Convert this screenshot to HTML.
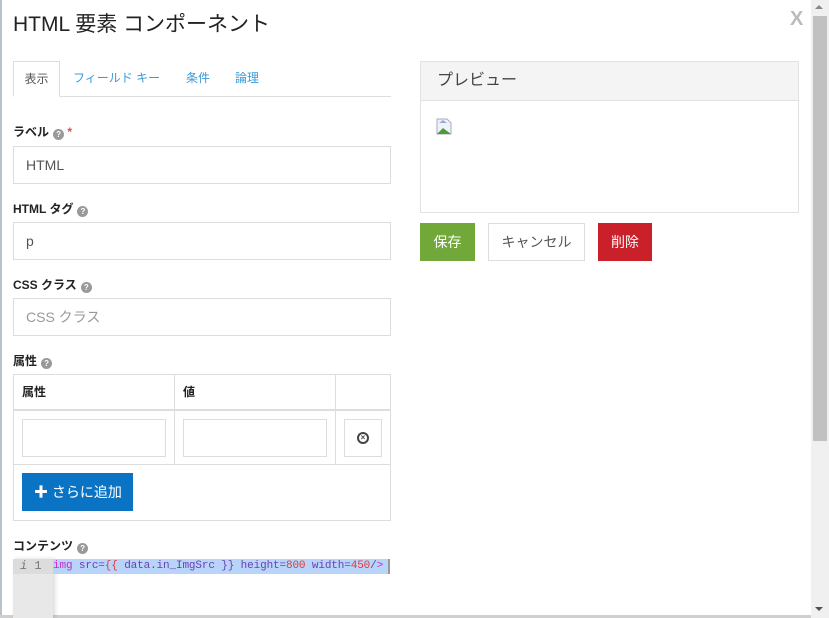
<!DOCTYPE html>
<html><head><meta charset="utf-8"><style>
*{box-sizing:border-box;margin:0;padding:0}
body{width:829px;height:618px;overflow:hidden;background:#fff;font-family:"Liberation Sans","Noto Sans CJK JP",sans-serif;color:#333;position:relative}
.a{position:absolute}
.lbl{position:absolute;left:13px;font-size:12px;font-weight:bold;color:#222;line-height:14px}
.q{display:inline-block;width:11px;height:11px;border-radius:50%;background:#999;color:#fff;font-size:8px;line-height:11px;text-align:center;vertical-align:-1px;margin-left:4px;font-weight:bold}
.inp{position:absolute;left:13px;width:378px;height:38px;border:1px solid #ddd;font-size:14px;color:#555;padding-left:12px;line-height:36px}
.mono{font-family:"Liberation Mono","DejaVu Sans Mono",monospace}
</style></head><body>
<div class="a" style="left:0;top:0;width:2px;height:618px;background:#b8c4cc"></div>
<div class="a" style="left:0;top:615px;width:829px;height:3px;background:#cfcfcf"></div>
<div class="a" style="left:13px;top:10px;font-size:21px;color:#222;line-height:30px">HTML 要素 コンポーネント</div>
<div class="a" style="left:790px;top:7px;font-size:20px;font-weight:bold;color:#bbb;line-height:24px">X</div>
<div class="a" style="left:811px;top:0;width:18px;height:618px;background:#f0f0f0"></div>
<div class="a" style="left:813px;top:16px;width:14px;height:425px;background:#c1c1c1"></div>
<div class="a" style="left:815px;top:5px;width:0;height:0;border-left:4px solid transparent;border-right:4px solid transparent;border-bottom:4px solid #888"></div>
<div class="a" style="left:815px;top:607px;width:0;height:0;border-left:4px solid transparent;border-right:4px solid transparent;border-top:4px solid #505050"></div>
<div class="a" style="left:13px;top:96px;width:378px;height:1px;background:#ddd"></div>
<div class="a" style="left:13px;top:61px;width:47px;height:36px;border:1px solid #ddd;border-bottom:1px solid #fff;background:#fff;font-size:12px;color:#555;text-align:center;line-height:34px">表示</div>
<div class="a" style="left:73px;top:70px;font-size:12px;color:#3a9ad9;line-height:16px">フィールド キー</div>
<div class="a" style="left:186px;top:70px;font-size:12px;color:#3a9ad9;line-height:16px">条件</div>
<div class="a" style="left:235px;top:70px;font-size:12px;color:#3a9ad9;line-height:16px">論理</div>
<div class="lbl" style="top:125px">ラベル<span class="q">?</span> <span style="color:#d9534f">*</span></div>
<div class="inp" style="top:146px">HTML</div>
<div class="lbl" style="top:202px">HTML タグ<span class="q">?</span></div>
<div class="inp" style="top:222px">p</div>
<div class="lbl" style="top:278px">CSS クラス<span class="q">?</span></div>
<div class="inp" style="top:298px;color:#999">CSS クラス</div>
<div class="lbl" style="top:354px">属性<span class="q">?</span></div>
<div class="a" style="left:13px;top:374px;width:378px;height:147px;border:1px solid #ddd"></div>
<div class="a" style="left:13px;top:409px;width:378px;height:2px;background:#ddd"></div>
<div class="a" style="left:13px;top:464px;width:378px;height:1px;background:#ddd"></div>
<div class="a" style="left:174px;top:374px;width:1px;height:91px;background:#ddd"></div>
<div class="a" style="left:335px;top:374px;width:1px;height:91px;background:#ddd"></div>
<div class="lbl" style="left:22px;top:385px">属性</div>
<div class="lbl" style="left:183px;top:385px">値</div>
<div class="a" style="left:22px;top:419px;width:144px;height:38px;border:1px solid #ddd"></div>
<div class="a" style="left:183px;top:419px;width:144px;height:38px;border:1px solid #ddd"></div>
<div class="a" style="left:344px;top:419px;width:38px;height:38px;border:1px solid #ddd"></div>
<div class="a" style="left:357px;top:432px;width:12px;height:12px;border-radius:50%;border:2px solid #444;font-size:8px;line-height:8px;text-align:center;font-weight:bold;color:#444">×</div>
<div class="a" style="left:22px;top:473px;width:111px;height:38px;background:#0a73c4;color:#fff;font-size:14px;line-height:38px;padding-left:12px"><b>✚</b> さらに追加</div>
<div class="lbl" style="top:539px">コンテンツ<span class="q">?</span></div>
<div class="a" style="left:13px;top:559px;width:40px;height:59px;background:#e8e8e8;box-shadow:2px 0 4px rgba(0,0,0,.15)"></div>
<div class="a" style="left:13px;top:559px;width:40px;height:15px;background:#dcdcdc"></div>
<div class="a mono" style="left:20px;top:559px;font-size:12px;line-height:15px;color:#777"><i>i</i> 1</div>
<div class="a mono" style="left:53px;top:559px;width:335px;height:15px;background:#b8d4f8;font-size:11px;line-height:15px;color:#6a3fb5;white-space:pre;letter-spacing:-0.13px;overflow:hidden"><span style="color:#c22ed0">img</span> src=<span style="color:#e03a3a">{{</span> data.in_ImgSrc }} height=<span style="color:#e03a3a">800</span> width=<span style="color:#e03a3a">450</span>/<span style="color:#c22ed0">&gt;</span></div>
<div class="a" style="left:388px;top:559px;width:2px;height:15px;background:#999"></div>
<div class="a" style="left:420px;top:61px;width:379px;height:152px;border:1px solid #e2e2e2"></div>
<div class="a" style="left:421px;top:62px;width:377px;height:39px;background:#f4f4f4;border-bottom:1px solid #e2e2e2;font-size:16px;color:#444;line-height:38px;padding-left:16px">プレビュー</div>
<svg class="a" style="left:436px;top:118px" width="18" height="17" viewBox="0 0 18 17"><path d="M1 1h10l4 4v11H1z" fill="#eef3f8" stroke="#aab"/><path d="M1 16l6-6 8 6z" fill="#4c9a3c"/><path d="M3 5l4-3 4 3z" fill="#9ac"/></svg>
<div class="a" style="left:420px;top:223px;width:55px;height:38px;background:#72a83a;color:#fff;font-size:14px;line-height:38px;text-align:center">保存</div>
<div class="a" style="left:488px;top:223px;width:97px;height:38px;border:1px solid #ddd;color:#555;font-size:14px;line-height:36px;text-align:center">キャンセル</div>
<div class="a" style="left:598px;top:223px;width:54px;height:38px;background:#c9202a;color:#fff;font-size:14px;line-height:38px;text-align:center">削除</div>
</body></html>
